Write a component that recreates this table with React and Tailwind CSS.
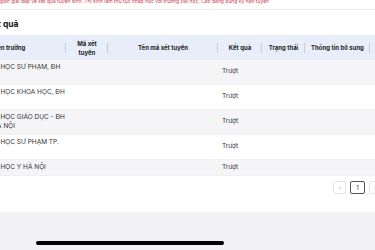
export default function App() {
  const rows = [
    { l1: "TRƯỜNG ĐẠI HỌC SƯ PHẠM, ĐH", l2: "ĐÀ NẴNG", kq: "Trượt", gray: true },
    { l1: "TRƯỜNG ĐẠI HỌC KHOA HỌC, ĐH", l2: "HUẾ", kq: "Trượt", gray: false },
    { l1: "TRƯỜNG ĐẠI HỌC GIÁO DỤC - ĐH", l2: "QUỐC GIA HÀ NỘI", kq: "Trượt", gray: true },
    { l1: "TRƯỜNG ĐẠI HỌC SƯ PHẠM TP.", l2: "HỒ CHÍ MINH", kq: "Trượt", gray: false },
    { l1: "TRƯỜNG ĐẠI HỌC Y HÀ NỘI", l2: null, kq: "Trượt", gray: true },
  ];
  const sep = <span className="absolute right-0 top-1/2 -translate-y-1/2 h-[10px] w-px bg-[#c8ccd4]" />;
  return (
    <div className="w-[375px] h-[250px] overflow-hidden bg-white flex flex-col" style={{ fontFamily: "Inter, 'Noto Sans', sans-serif" }}>
      <div className="flex-1 -ml-[47px] w-[440px] flex flex-col">
        <div className="-mt-[3px] pl-[35px] h-[13px] border-b border-[#ececec] text-[5px] leading-[8px] text-[#d0395a] whitespace-nowrap">
          Thời gian giải đáp về kết quả tuyển sinh. Thí sinh làm thủ tục nhập học với trường Đại học, Cao đẳng đúng kỳ hạn tuyển
        </div>
        <div className="pl-[34px] pt-[8px] h-[25px] text-[8.5px] font-bold text-[#111]">Kết quả</div>
        <div className="text-[6px] text-[#222]">
          <div className="flex h-[25px] bg-[#e7eef9] font-bold items-center">
            <div className="relative w-[113px] h-full flex items-center justify-center">Tên trường{sep}</div>
            <div className="relative w-[42px] h-full flex items-center justify-center text-center leading-[9px]">Mã xét<br />tuyển{sep}</div>
            <div className="relative w-[110px] h-full flex items-center justify-center">Tên mã xét tuyển{sep}</div>
            <div className="relative w-[44px] h-full flex items-center justify-center">Kết quả{sep}</div>
            <div className="relative w-[43px] h-full flex items-center justify-center">Trạng thái{sep}</div>
            <div className="relative w-[65px] h-full flex items-center justify-center">Thông tin bổ sung{sep}</div>
          </div>
          {rows.map((r, i) => (
            <div key={i} className={`flex items-center border-b border-[#f0f0f0] ${r.gray ? "bg-[#f5f5f7]" : "bg-white"}`}>
              <div className="w-[113px] pl-[5px] pr-[4px] py-[3px] text-[6.5px] leading-[9px] text-[#333] whitespace-nowrap">
                <div>{r.l1}</div>
                {r.l2 && <div>{r.l2}</div>}
              </div>
              <div className="w-[42px]" />
              <div className="w-[110px]" />
              <div className="w-[44px] pl-[4px] text-[6.5px] text-[#333]">{r.kq}</div>
              <div className="w-[43px]" />
              <div className="w-[65px]" />
            </div>
          ))}
        </div>
        <div className="flex justify-end gap-[4px] pr-[11px] mt-[5px]">
          <div className="w-[13px] h-[13px] rounded-[2px] border border-[#e6e6e6] flex items-center justify-center text-[6px] text-[#c8c8c8]">&lt;</div>
          <div className="w-[15px] h-[13px] rounded-[2px] border border-[#555] flex items-center justify-center text-[6px] text-[#333]">1</div>
          <div className="w-[13px] h-[13px] rounded-[2px] border border-[#e6e6e6] flex items-center justify-center text-[6px] text-[#c8c8c8]">&gt;</div>
        </div>
      </div>
      <div className="h-[38px] bg-[#f2f2f6] flex items-end pb-[5px] pl-[36px]">
        <div className="w-[188px] h-[4px] rounded-full bg-black" />
      </div>
    </div>
  );
}
